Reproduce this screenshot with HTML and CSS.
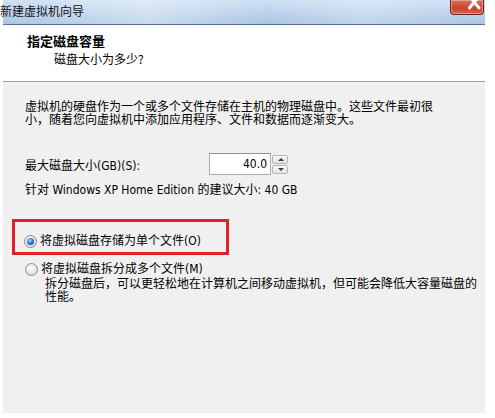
FILE: index.html
```html
<!DOCTYPE html>
<html lang="zh-CN">
<head>
    <meta charset="UTF-8">
    <title>新建虚拟机向导</title>
    <link rel="stylesheet" href="styles.css">
</head>
<body>
    <div class="wizard">
        <div class="titlebar">
            <span class="title">新建虚拟机向导</span>
            <span class="close-btn">
                <svg width="33" height="15" viewBox="0 0 33 15">
                    <path d="M19 -4 L29 8 M29 -4 L19 8" stroke="#fff" stroke-width="3" stroke-linecap="round"/>
                </svg>
            </span>
        </div>

        <div class="header">
            <h1>指定磁盘容量</h1>
            <p>磁盘大小为多少?</p>
        </div>

        <div class="content">
            <p class="intro">虚拟机的硬盘作为一个或多个文件存储在主机的物理磁盘中。这些文件最初很小，随着您向虚拟机中添加应用程序、文件和数据而逐渐变大。</p>

            <div class="size-row">
                <label for="diskSize">最大磁盘大小(GB)(S):</label>
                <div class="spinner">
                    <input type="text" id="diskSize" value="40.0">
                    <div class="spin-btns">
                        <span class="spin-btn up"></span>
                        <span class="spin-btn down"></span>
                    </div>
                </div>
            </div>
            <p class="hint">针对 Windows XP Home Edition 的建议大小: 40 GB</p>

            <div class="highlight">
                <label class="option">
                    <span class="radio checked"></span>
                    将虚拟磁盘存储为单个文件(O)
                </label>
            </div>
            <label class="option second">
                <span class="radio"></span>
                将虚拟磁盘拆分成多个文件(M)
            </label>
            <p class="note">拆分磁盘后，可以更轻松地在计算机之间移动虚拟机，但可能会降低大容量磁盘的性能。</p>
        </div>
    </div>
</body>
</html>
```

FILE: styles.css
```css
* {
    margin: 0;
    padding: 0;
    box-sizing: border-box;
}

body {
    background: #fff;
    font-family: "DejaVu Sans Condensed", "DejaVu Sans", "Noto Sans CJK SC", sans-serif;
    font-stretch: condensed;
    font-size: 12px;
    color: #000;
}

.wizard {
    width: 482px;
    height: 413px;
    margin-left: 3px;
    background: #f0f0f0;
    display: flex;
    flex-direction: column;
}

/* title bar */
.titlebar {
    height: 25px;
    display: flex;
    justify-content: space-between;
    align-items: flex-start;
    background: linear-gradient(90deg, rgba(255,255,255,0) 0%, rgba(255,255,255,0.35) 30%, rgba(255,255,255,0) 55%, rgba(255,255,255,0.25) 75%, rgba(255,255,255,0) 100%),
                linear-gradient(180deg, #cfe0f3 0%, #bcd3ec 50%, #a9c5e6 100%);
    border-bottom: 1px solid #5b718c;
}

.title {
    font-family: "Noto Sans CJK SC", sans-serif;
    font-size: 12px;
    line-height: 22px;
    margin-left: -3px;
    color: #111;
}

.close-btn {
    width: 34px;
    height: 15px;
    margin-right: 1px;
    border: 1px solid #6e2a20;
    border-top: none;
    border-radius: 0 0 4px 4px;
    background: linear-gradient(180deg, #d9705d 0%, #c8452e 60%, #d8674e 100%);
    box-shadow: inset 0 0 0 1px rgba(255,255,255,0.35);
    display: flex;
}

/* header */
.header {
    height: 57px;
    background: #fff;
    border-bottom: 1px solid #a0a0a0;
    padding: 8px 0 0 24px;
}

.header h1 {
    font-family: "Noto Sans CJK SC", sans-serif;
    font-size: 13px;
    font-weight: bold;
    line-height: 16px;
}

.header p {
    font-family: "Noto Sans CJK SC", sans-serif;
    line-height: 16px;
    margin: 2px 0 0 27px;
}

/* body */
.content {
    padding: 19px 0 0 22px;
}

.intro {
    max-width: 415px;
    line-height: 13px;
}

.size-row {
    display: flex;
    align-items: center;
    margin-top: 26px;
    height: 22px;
}

.size-row label {
    width: 184px;
}

.spinner {
    display: flex;
    align-items: center;
}

.spinner input {
    width: 62px;
    height: 22px;
    border: 1px solid #abadb3;
    border-top-color: #8e9095;
    background: #fff;
    font-family: inherit;
    font-stretch: condensed;
    font-size: 12px;
    text-align: right;
    padding-right: 3px;
    outline: none;
}

.spin-btns {
    display: flex;
    flex-direction: column;
    gap: 1px;
    margin-left: 1px;
}

.spin-btn {
    width: 16px;
    height: 9px;
    border: 1px solid #b5b5b5;
    border-radius: 2px;
    background: linear-gradient(180deg, #f8f8f8, #e1e1e1);
    position: relative;
}

.spin-btn::after {
    content: "";
    position: absolute;
    left: 5px;
    top: 2px;
    border-left: 3px solid transparent;
    border-right: 3px solid transparent;
}

.spin-btn.up::after {
    border-bottom: 3px solid #3c3c3c;
}

.spin-btn.down::after {
    border-top: 3px solid #3c3c3c;
}

.hint {
    line-height: 13px;
    margin-top: 9px;
}

/* disk file options */
.highlight {
    width: 217px;
    height: 36px;
    margin: 22px 0 0 -13px;
    border: 3px solid #e3202a;
    padding: 12px 0 0 9px;
}

.option {
    display: flex;
    align-items: center;
    gap: 3px;
    height: 14px;
    line-height: 14px;
}

.option.second {
    margin-top: 7px;
}

.radio {
    width: 13px;
    height: 13px;
    border-radius: 50%;
    border: 1px solid #8d8d8d;
    background: radial-gradient(circle at 45% 40%, #fff 0%, #e8e8e8 50%, #c9c9c9 100%);
    display: flex;
    justify-content: center;
    align-items: center;
}

.radio.checked::after {
    content: "";
    width: 7px;
    height: 7px;
    border-radius: 50%;
    background: radial-gradient(circle at 40% 35%, #a6dcff 0%, #2a7ad8 45%, #0f3f8e 100%);
}

.note {
    max-width: 440px;
    margin: 2px 0 0 20px;
    line-height: 13px;
}
```
